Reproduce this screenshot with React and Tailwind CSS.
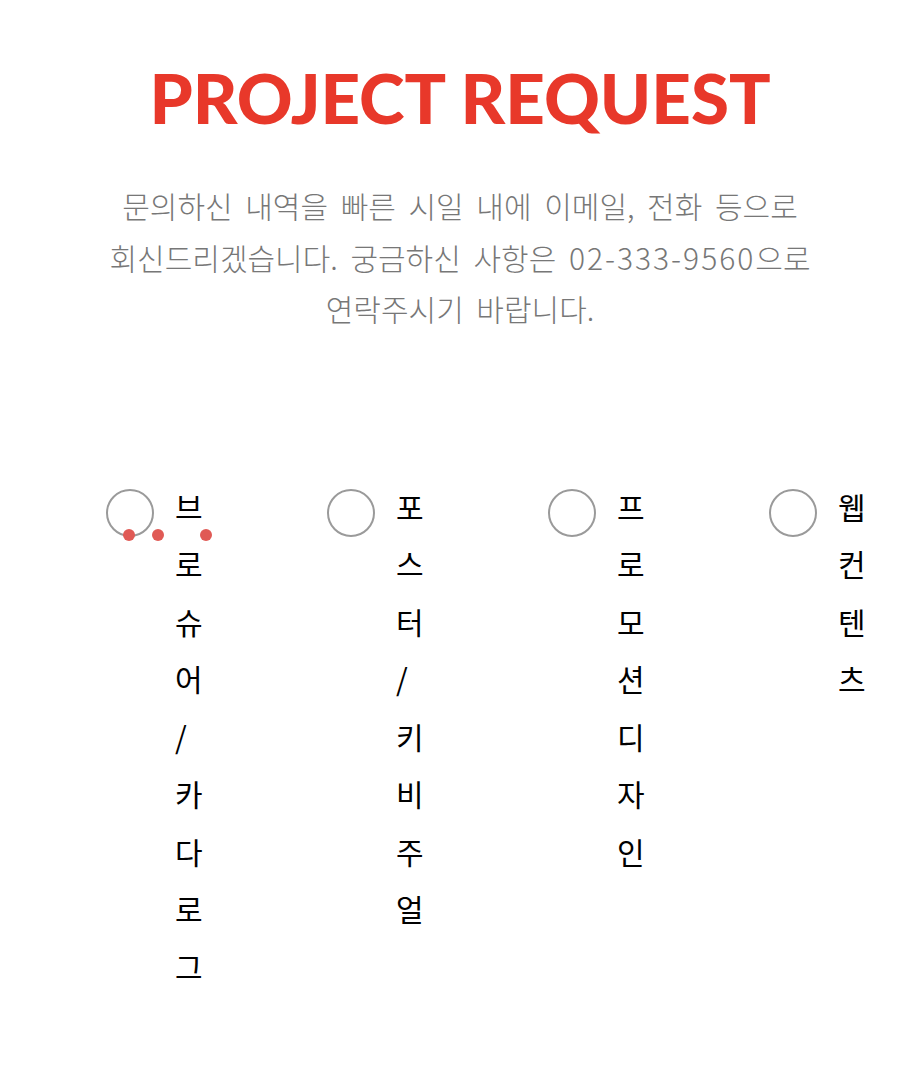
import React, { useState } from 'react';

const options = [
  { id: 'brochure', label: '브로슈어/카다로그' },
  { id: 'poster', label: '포스터/키비주얼' },
  { id: 'promotion', label: '프로모션디자인' },
  { id: 'web', label: '웹컨텐츠' },
];

export default function App() {
  const [selected, setSelected] = useState(null);

  return (
    <div className="min-h-[1081px] overflow-hidden bg-white" style={{ fontFamily: "'Noto Sans CJK KR', 'Noto Sans', sans-serif" }}>
      <div className="pt-[60px] pl-[20px] text-center">
        <h1 className="text-[69px] leading-[76px] font-black text-[#e8382a] font-['Lato',sans-serif]">
          PROJECT REQUEST
        </h1>
        <p className="mt-[44px] text-[30px] leading-[51.5px] font-light text-[#777] [word-spacing:6px]">
          문의하신 내역을 빠른 시일 내에 이메일, 전화 등으로
          <br />
          회신드리겠습니다. 궁금하신 사항은 <span className="tracking-[2px]">02-333-9560</span>으로
          <br />
          연락주시기 바랍니다.
        </p>
      </div>

      <div className="relative mt-[148px] grid grid-cols-[repeat(3,221px)_1fr] pl-[106px]">
        {options.map((o) => (
          <label key={o.id} className="flex items-start cursor-pointer">
            <input
              type="radio"
              name="type"
              className="sr-only"
              checked={selected === o.id}
              onChange={() => setSelected(o.id)}
            />
            <span className="mt-[6px] w-[48px] h-[48px] shrink-0 rounded-full border-2 border-[#9a9a9a]" />
            <span className="ml-[21px] -mt-[5px] flex flex-col text-[30px] leading-[57.5px] text-black">
              {[...o.label].map((ch, i) => (
                <span key={i}>{ch}</span>
              ))}
            </span>
          </label>
        ))}

        {/* loading dots */}
        <span className="absolute left-[123px] top-[46px] w-[12px] h-[12px] rounded-full bg-[#e05a55]" />
        <span className="absolute left-[152px] top-[46px] w-[12px] h-[12px] rounded-full bg-[#e05a55]" />
        <span className="absolute left-[200px] top-[46px] w-[12px] h-[12px] rounded-full bg-[#e05a55]" />
      </div>
    </div>
  );
}
